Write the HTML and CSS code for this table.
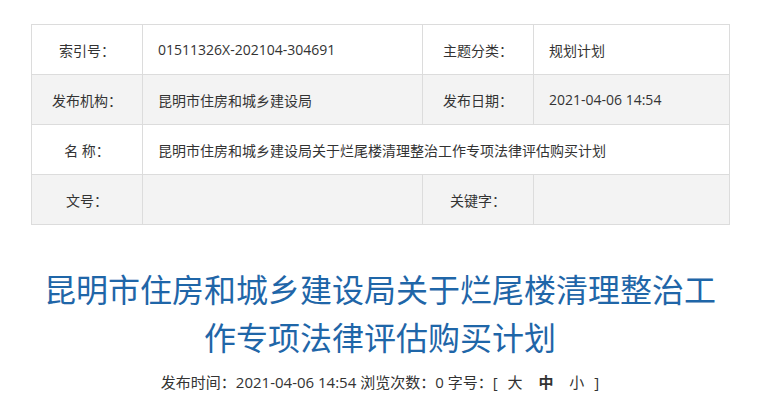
FILE: index.html
```html
<!DOCTYPE html>
<html lang="zh-CN">
<head>
<meta charset="utf-8">
<title>规划计划</title>
<link rel="stylesheet" href="styles.css">
</head>
<body>
<div class="page">
  <table class="info">
    <colgroup>
      <col class="c1"><col class="c2"><col class="c3"><col class="c4">
    </colgroup>
    <tr>
      <th>索引号：</th>
      <td>01511326X-202104-304691</td>
      <th>主题分类：</th>
      <td>规划计划</td>
    </tr>
    <tr class="alt">
      <th>发布机构：</th>
      <td>昆明市住房和城乡建设局</td>
      <th>发布日期：</th>
      <td>2021-04-06 14:54</td>
    </tr>
    <tr>
      <th>名 称：</th>
      <td colspan="3">昆明市住房和城乡建设局关于烂尾楼清理整治工作专项法律评估购买计划</td>
    </tr>
    <tr class="alt">
      <th>文号：</th>
      <td></td>
      <th>关键字：</th>
      <td></td>
    </tr>
  </table>
  <h1 class="title">昆明市住房和城乡建设局关于烂尾楼清理整治工作专项法律评估购买计划</h1>
  <p class="meta">发布时间：2021-04-06 14:54 浏览次数：0 字号：[ <span class="sz">大</span> <span class="sz cur">中</span> <span class="sz">小</span> ]</p>
</div>
</body>
</html>
```
FILE: styles.css
```css
html, body {
  margin: 0;
  padding: 0;
  background: #fff;
}
body {
  font-family: "Open Sans", "Noto Sans CJK SC", sans-serif;
  color: #333;
}
.page {
  width: 698px;
  margin: 0 0 0 31px;
  padding-top: 24px;
}
.info {
  width: 698px;
  border-collapse: collapse;
  table-layout: fixed;
  font-size: 14px;
}
.c1 { width: 111px; }
.c2 { width: 280px; }
.c3 { width: 111px; }
.c4 { width: 196px; }
.info th, .info td {
  border: 1px solid #dcdcdc;
  height: 49px;
  padding: 0;
  font-weight: normal;
  color: #333;
}
.info th {
  text-align: center;
}
.info td {
  text-align: left;
  padding-left: 15px;
}
.info tr.alt th, .info tr.alt td {
  background: #f3f3f3;
}
.title {
  margin: 41px 0 0;
  font-size: 32px;
  line-height: 48px;
  font-weight: normal;
  color: #1f66a8;
  text-align: center;
}
.meta {
  margin: 10px 0 0;
  font-size: 15px;
  line-height: 20px;
  text-align: center;
  color: #333;
}
.sz {
  margin: 0 6px;
}
.cur {
  font-weight: bold;
}
```
